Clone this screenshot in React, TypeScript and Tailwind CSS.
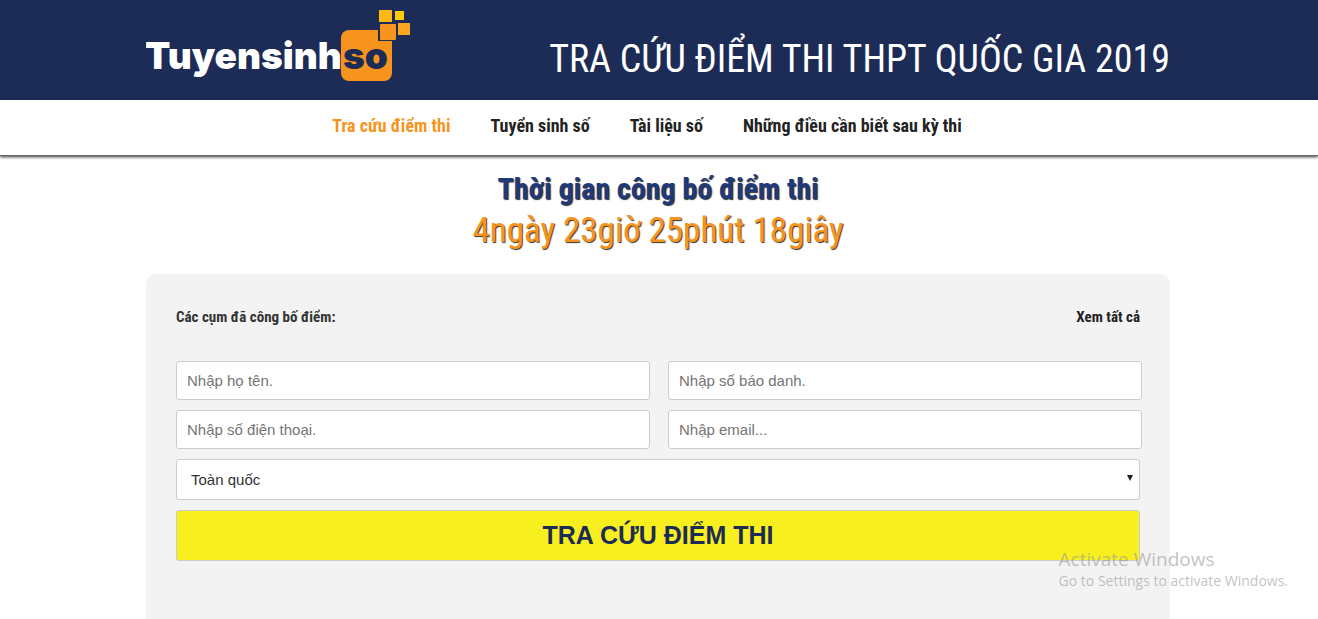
import { useState } from "react";

const condensed = "font-['Roboto_Condensed','Liberation_Sans_Narrow',Roboto,sans-serif]";

const navItems = [
  { label: "Tra cứu điểm thi", active: true },
  { label: "Tuyển sinh số", active: false },
  { label: "Tài liệu số", active: false },
  { label: "Những điều cần biết sau kỳ thi", active: false },
];

const fields = [
  { id: "fullname", type: "text", placeholder: "Nhập họ tên." },
  { id: "candidate", type: "text", placeholder: "Nhập số báo danh." },
  { id: "phone", type: "tel", placeholder: "Nhập số điện thoại." },
  { id: "email", type: "email", placeholder: "Nhập email..." },
];

function Logo() {
  return (
    <a href="#" aria-label="Tuyensinhso" className="block shrink-0">
      <svg width="266" height="76" viewBox="0 0 266 76" className="block">
        <rect x="195" y="22" width="51" height="51" rx="8" fill="#f7941e" />
        <path d="M233 2h13v12h-13z" fill="#fdb813" />
        <path d="M249 3h9v9h-9z" fill="#ffcb05" />
        <path d="M252 15h12v12h-12z" fill="#fba61c" />
        <rect x="232" y="15" width="19" height="18" fill="#1c2c56" />
        <rect x="234" y="16" width="16" height="16" rx="1" fill="#f7941e" />
        <text x="-1" y="61" fontSize="37" fontWeight="900" fill="#fff" className="font-[Inter,sans-serif]">
          Tuyensinh
        </text>
        <text x="197" y="61" fontSize="37" fontWeight="900" fill="#1c2c56" className="font-[Inter,sans-serif]">
          so
        </text>
      </svg>
    </a>
  );
}

function Header() {
  return (
    <header className="bg-[#1c2c56] pr-0.5">
      <div className="mx-auto flex h-[100px] max-w-5xl items-start justify-between pt-2">
        <Logo />
        <h1 className="pt-6 text-[38px] leading-[54px] text-white">TRA CỨU ĐIỂM THI THPT QUỐC GIA 2019</h1>
      </div>
    </header>
  );
}

function Nav() {
  return (
    <nav className="border-b border-[#666] pt-3 pr-6 pb-[15px] shadow-[0_1px_3px_#333]">
      <ul className="flex justify-center gap-10 text-lg font-bold">
        {navItems.map((item) => (
          <li key={item.label}>
            <a href="#" className={item.active ? "text-[#f7941e]" : "text-[#222]"}>
              {item.label}
            </a>
          </li>
        ))}
      </ul>
    </nav>
  );
}

function SearchForm() {
  const [area, setArea] = useState("all");

  return (
    <form
      className="font-['Liberation_Sans',Arial,sans-serif]"
      onSubmit={(e) => e.preventDefault()}
    >
      <div className="-mr-0.5 grid grid-cols-2 gap-x-[18px] gap-y-2.5">
        {fields.map((field) => (
          <input
            key={field.id}
            id={field.id}
            type={field.type}
            aria-label={field.placeholder}
            placeholder={field.placeholder}
            className="h-[39px] w-full rounded-[3px] border border-[#ccc] bg-white px-2.5 text-[15px] text-[#333] placeholder:text-[#757575]"
          />
        ))}
      </div>
      <div className="relative mt-2.5">
        <select
          aria-label="Khu vực"
          value={area}
          onChange={(e) => setArea(e.target.value)}
          className="h-[41px] w-full appearance-none rounded-[3px] border border-[#ccc] bg-white px-3.5 pt-0.5 text-[15px] text-[#333]"
        >
          <option value="all">Toàn quốc</option>
        </select>
        <svg
          width="6"
          height="6"
          viewBox="0 0 6 6"
          className="pointer-events-none absolute top-4 right-[7px]"
        >
          <path d="M0 0h6L3 6z" fill="#222" />
        </svg>
      </div>
      <button
        type="submit"
        className="mt-2.5 h-[51px] w-full rounded-[3px] border border-[#ccc] bg-[#f8ef1e] text-[25px] font-bold text-[#1c2c56]"
      >
        TRA CỨU ĐIỂM THI
      </button>
    </form>
  );
}

export default function App() {
  return (
    <div className={`relative h-screen overflow-hidden bg-white ${condensed}`}>
      <Header />
      <Nav />
      <main className="pr-0.5">
        <section className="pt-[13px] text-center">
          <h2 className="text-3xl leading-10 font-bold text-[#1e3a7b] [text-shadow:1px_1px_1px_#333]">
            Thời gian công bố điểm thi
          </h2>
          <p className="text-[35px] leading-[44px] text-[#f7941e] [text-shadow:1px_1px_1px_#333]">
            4ngày 23giờ 25phút 18giây
          </p>
        </section>
        <section className="mx-auto mt-[21px] min-h-[400px] max-w-5xl rounded-[10px] bg-[#f3f3f3] px-[30px] pt-8">
          <div className="mb-[33px] flex justify-between text-[15px] leading-[22px] font-bold text-[#333]">
            <h3>Các cụm đã công bố điểm:</h3>
            <a href="#" className="text-[#222]">
              Xem tất cả
            </a>
          </div>
          <SearchForm />
        </section>
      </main>
      <div className="pointer-events-none absolute right-[30px] bottom-7 font-['Open_Sans',sans-serif] text-[#999]/60">
        <p className="text-[19px] leading-6">Activate Windows</p>
        <p className="text-sm leading-5">Go to Settings to activate Windows.</p>
      </div>
    </div>
  );
}
